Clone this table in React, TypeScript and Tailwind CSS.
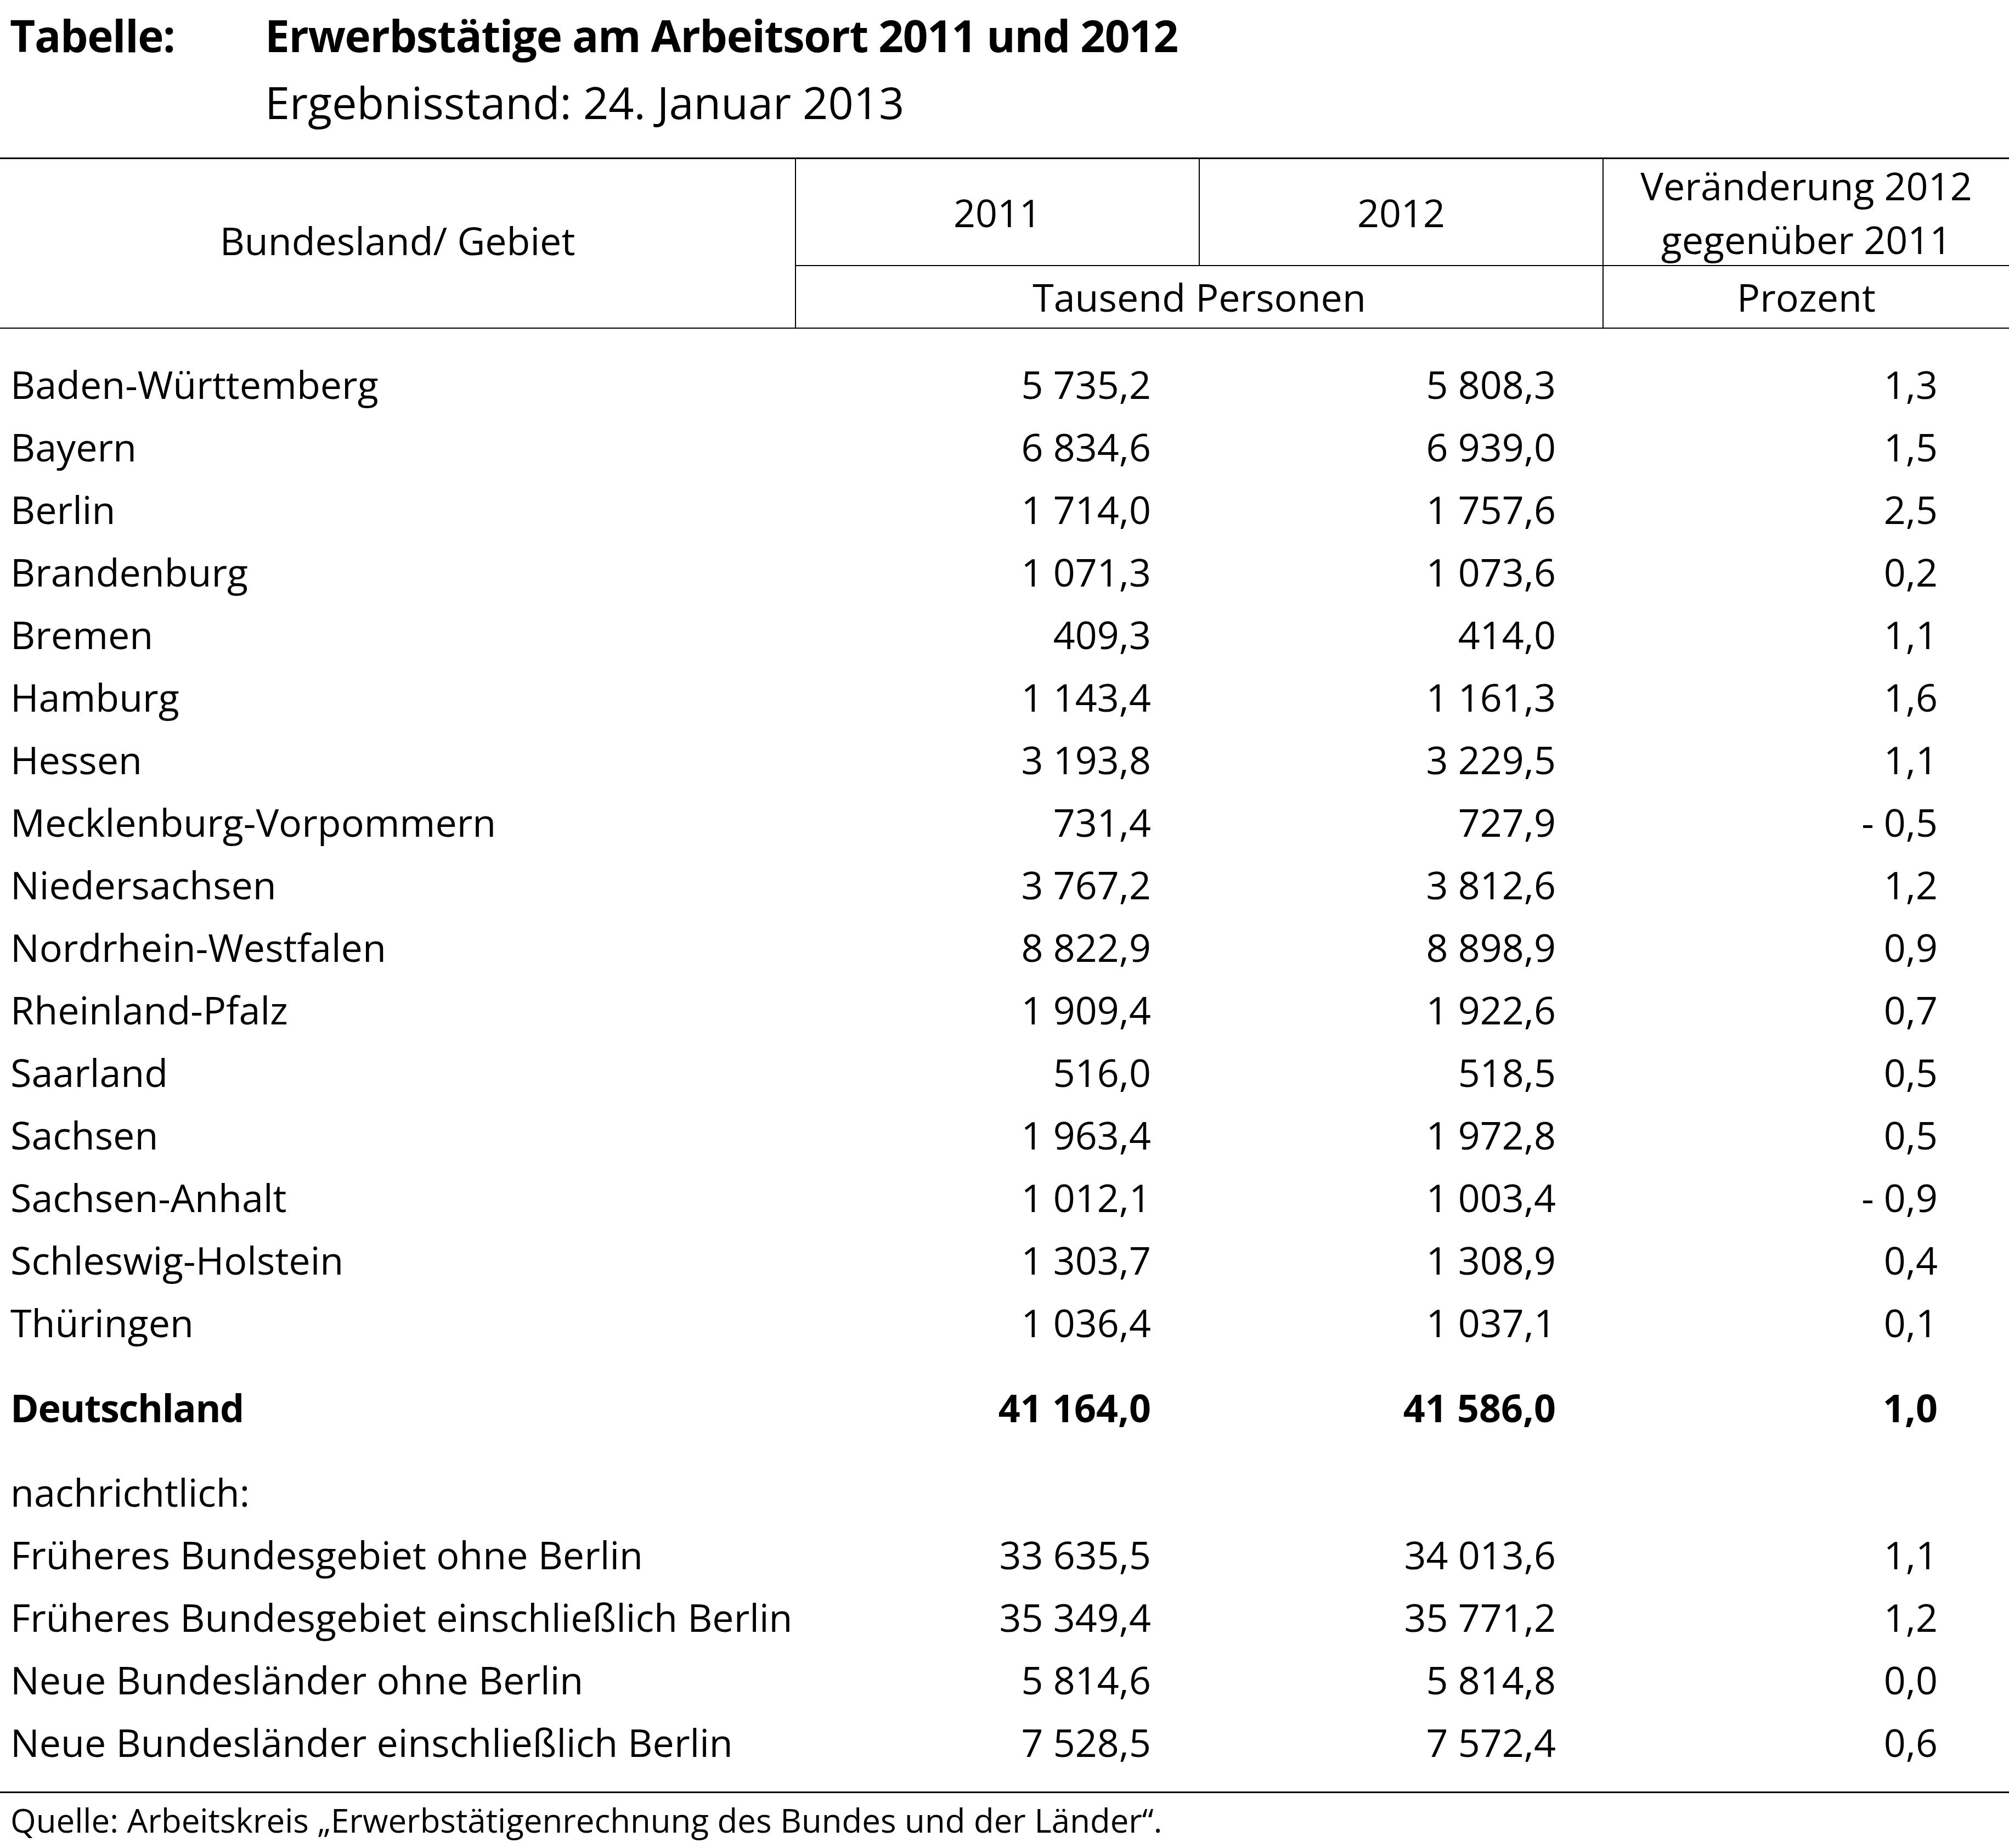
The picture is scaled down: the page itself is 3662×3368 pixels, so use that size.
const rows: [string, string, string, string][] = [
  ["Baden-Württemberg", "5 735,2", "5 808,3", "1,3"],
  ["Bayern", "6 834,6", "6 939,0", "1,5"],
  ["Berlin", "1 714,0", "1 757,6", "2,5"],
  ["Brandenburg", "1 071,3", "1 073,6", "0,2"],
  ["Bremen", "409,3", "414,0", "1,1"],
  ["Hamburg", "1 143,4", "1 161,3", "1,6"],
  ["Hessen", "3 193,8", "3 229,5", "1,1"],
  ["Mecklenburg-Vorpommern", "731,4", "727,9", "- 0,5"],
  ["Niedersachsen", "3 767,2", "3 812,6", "1,2"],
  ["Nordrhein-Westfalen", "8 822,9", "8 898,9", "0,9"],
  ["Rheinland-Pfalz", "1 909,4", "1 922,6", "0,7"],
  ["Saarland", "516,0", "518,5", "0,5"],
  ["Sachsen", "1 963,4", "1 972,8", "0,5"],
  ["Sachsen-Anhalt", "1 012,1", "1 003,4", "- 0,9"],
  ["Schleswig-Holstein", "1 303,7", "1 308,9", "0,4"],
  ["Thüringen", "1 036,4", "1 037,1", "0,1"],
];

const memo: [string, string, string, string][] = [
  ["Früheres Bundesgebiet ohne Berlin", "33 635,5", "34 013,6", "1,1"],
  ["Früheres Bundesgebiet einschließlich Berlin", "35 349,4", "35 771,2", "1,2"],
  ["Neue Bundesländer ohne Berlin", "5 814,6", "5 814,8", "0,0"],
  ["Neue Bundesländer einschließlich Berlin", "7 528,5", "7 572,4", "0,6"],
];

function Row({ cells, bold = false }: { cells: [string, string, string, string]; bold?: boolean }) {
  return (
    <div
      className={`grid grid-cols-[1451px_736px_736px_1fr] h-[114px] items-center text-[70px] leading-none whitespace-nowrap ${
        bold ? "font-bold" : ""
      }`}
    >
      <div className={`pl-[19px] ${bold ? "tracking-[-0.02em]" : ""}`}>{cells[0]}</div>
      <div className="text-right pr-[89px]">{cells[1]}</div>
      <div className="text-right pr-[87px]">{cells[2]}</div>
      <div className="text-right pr-[130px]">{cells[3]}</div>
    </div>
  );
}

export default function App() {
  return (
    <div className="w-[3662px] min-h-[3368px] bg-white text-black font-['Open_Sans',sans-serif]">
      {/* title */}
      <div className="flex leading-[128px] h-[128px] text-[80px] font-bold tracking-[-0.017em] whitespace-nowrap">
        <div className="w-[483px] pl-[18px]">Tabelle:</div>
        <div>Erwerbstätige am Arbeitsort 2011 und 2012</div>
      </div>
      <div className="flex leading-[115px] h-[115px] text-[81px] whitespace-nowrap">
        <div className="w-[483px]" />
        <div>Ergebnisstand: 24. Januar 2013</div>
      </div>

      {/* table head */}
      <div className="mt-[44px] grid grid-cols-[1451px_736px_736px_1fr] grid-rows-[195px_112px] border-t-[3px] border-b-2 border-black text-[70px] whitespace-nowrap">
        <div className="row-span-2 border-r-2 border-black flex items-center justify-center pb-[12px] leading-none">
          Bundesland/ Gebiet
        </div>
        <div className="border-r-2 border-b-2 border-black flex items-center justify-center leading-none">
          2011
        </div>
        <div className="border-r-2 border-b-2 border-black flex items-center justify-center leading-none">
          2012
        </div>
        <div className="border-b-2 border-black flex flex-col items-center justify-center leading-[98px]">
          <span>Veränderung 2012</span>
          <span>gegenüber 2011</span>
        </div>
        <div className="col-span-2 border-r-2 border-black flex items-center justify-center leading-none">
          Tausend Personen
        </div>
        <div className="flex items-center justify-center leading-none">Prozent</div>
      </div>

      {/* body */}
      <div className="pt-[44px]">
        {rows.map((r) => (
          <Row key={r[0]} cells={r} />
        ))}
        <div className="mt-[41px]">
          <Row cells={["Deutschland", "41 164,0", "41 586,0", "1,0"]} bold />
        </div>
        <div className="mt-[40px]">
          <Row cells={["nachrichtlich:", "", "", ""]} />
        </div>
        {memo.map((r) => (
          <Row key={r[0]} cells={r} />
        ))}
      </div>

      {/* source */}
      <div className="mt-[33px] border-t-[3px] border-black pt-[9px] pl-[19px] text-[60px] leading-[80px] whitespace-nowrap">
        Quelle: Arbeitskreis „Erwerbstätigenrechnung des Bundes und der Länder“.
      </div>
    </div>
  );
}
